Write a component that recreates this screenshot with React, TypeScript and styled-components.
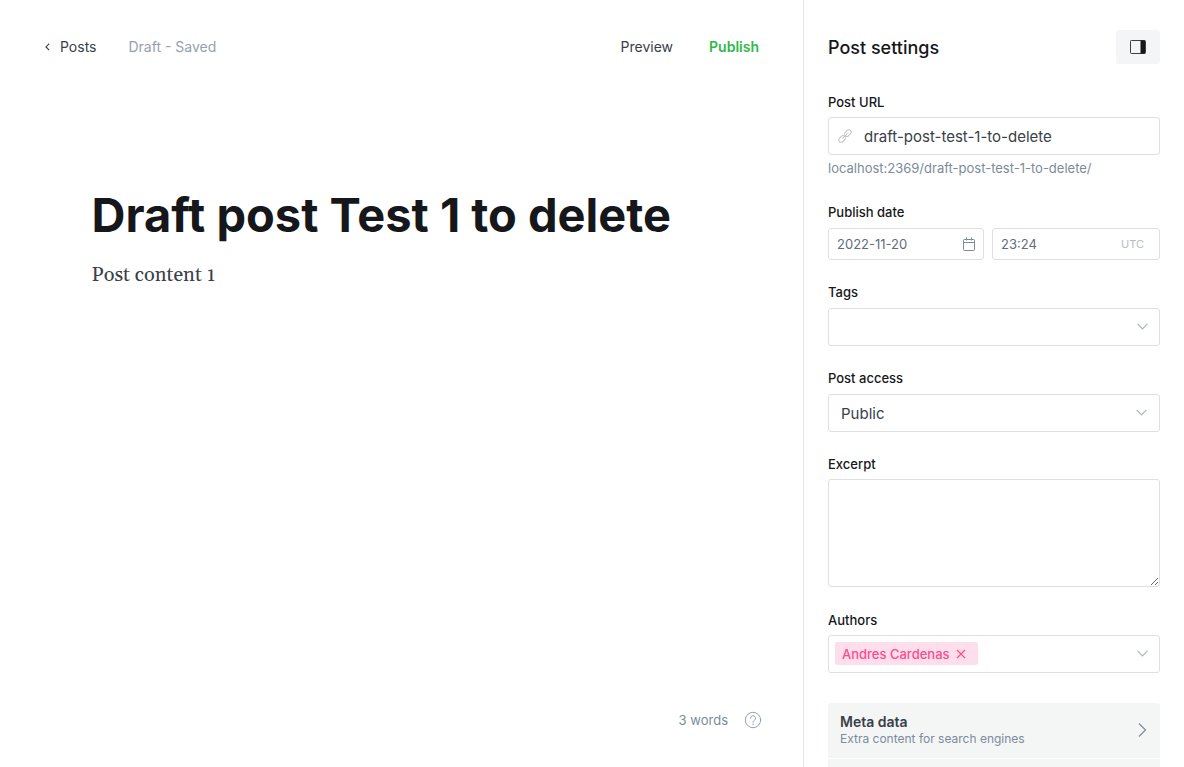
import React from "react";
import styled, { createGlobalStyle } from "styled-components";

const GlobalStyle = createGlobalStyle`
  *, *::before, *::after { box-sizing: border-box; }
  body {
    margin: 0;
    background: #fff;
    color: #15171a;
    font-family: Inter, "Liberation Sans", sans-serif;
    font-size: 14px;
  }
  button, input, select, textarea { font: inherit; color: inherit; }
  button { border: 0; padding: 0; background: none; cursor: pointer; }
`;

const Page = styled.div`
  display: flex;
  height: 100vh;
  overflow: hidden;
`;

const Editor = styled.main`
  flex: 1;
  min-width: 0;
  display: flex;
  flex-direction: column;
`;

const Toolbar = styled.header`
  display: flex;
  align-items: center;
  justify-content: space-between;
  padding: 28px 44px 0;
  height: 64px;
`;

const ToolbarGroup = styled.div<{ $gap: number }>`
  display: flex;
  align-items: center;
  gap: ${(p) => p.$gap}px;
`;

const BackLink = styled.a`
  display: flex;
  align-items: center;
  gap: 8px;
  color: #394047;
  text-decoration: none;
`;

const Status = styled.span`
  color: #95a1ad;
`;

const ToolbarButton = styled.button<{ $primary?: boolean }>`
  color: ${(p) => (p.$primary ? "#30b84a" : "#394047")};
  font-weight: ${(p) => (p.$primary ? 600 : 400)};
`;

const Canvas = styled.article`
  flex: 1;
  width: 100%;
  max-width: 620px;
  margin: 0 auto;
  padding-top: 122px;
`;

const Title = styled.h1`
  margin: 0;
  font-size: 47px;
  line-height: 58px;
  font-weight: 700;
`;

const Body = styled.p`
  margin: 15px 0 0;
  font-family: Georgia, Gelasio, "Liberation Serif", serif;
  font-size: 20px;
  line-height: 32px;
  color: #394047;
`;

const Footer = styled.footer`
  display: flex;
  align-items: center;
  justify-content: flex-end;
  gap: 16px;
  padding: 0 41px 38px;
  font-size: 13px;
  line-height: 18px;
  color: #7c8b9a;
`;

const HelpButton = styled.button`
  display: flex;
  color: #95a1b5;
`;

const Settings = styled.aside`
  flex: 0 0 381px;
  border-left: 1px solid #e4e7e9;
  padding: 30px 24px 0;
  overflow-y: auto;
  scrollbar-width: none;
`;

const SettingsHeader = styled.div`
  display: flex;
  align-items: center;
  justify-content: space-between;
  margin-bottom: 30px;
`;

const SettingsTitle = styled.h2`
  margin: 0;
  padding-top: 2px;
  font-size: 18px;
  line-height: 24px;
  font-weight: 500;
`;

const PanelToggle = styled.button`
  display: flex;
  align-items: center;
  justify-content: center;
  width: 44px;
  height: 34px;
  border-radius: 3px;
  background: #f4f5f6;
`;

const Form = styled.form`
  display: flex;
  flex-direction: column;
  gap: 24px;
`;

const Field = styled.div<{ $tight?: boolean }>`
  display: flex;
  flex-direction: column;
  gap: ${(p) => (p.$tight ? 7 : 8)}px;
  padding-bottom: ${(p) => (p.$tight ? 1 : 0)}px;
`;

const Label = styled.label`
  font-size: 13px;
  line-height: 16px;
  font-weight: 500;
`;

const Control = styled.div<{ $small?: boolean }>`
  display: flex;
  align-items: center;
  height: ${(p) => (p.$small ? 32 : 38)}px;
  padding: ${(p) => (p.$small ? "0 8px" : "0 11px 0 6px")};
  border: 1px solid #dddfe1;
  border-radius: 3px;
  color: ${(p) => (p.$small ? "#626d79" : "#394047")};
  font-size: ${(p) => (p.$small ? 13 : 15)}px;
`;

const UrlControl = styled(Control)`
  padding: 0 12px 0 9px;
  gap: 12px;
`;

const DateControl = styled(Control)`
  padding: 0 7px 0 8px;
`;

const TextInput = styled.input`
  flex: 1;
  min-width: 0;
  width: 100%;
  padding: 0;
  border: 0;
  outline: 0;
  background: transparent;
`;

const Hint = styled.p`
  margin: -3px 0 2px;
  font-size: 13px;
  line-height: 18px;
  color: #7c8b9a;
`;

const DateRow = styled.div`
  display: grid;
  grid-template-columns: 13fr 14fr;
  gap: 8px;
`;

const Zone = styled.span`
  padding-right: 7px;
  font-size: 11px;
  color: #b6bec8;
`;

const SelectControl = styled(Control)`
  padding: 0 12px;
`;

const Select = styled.select`
  flex: 1;
  appearance: none;
  border: 0;
  padding: 0;
  outline: 0;
  background: transparent;
`;

const Excerpt = styled.textarea`
  display: block;
  width: 100%;
  height: 108px;
  padding: 8px 12px;
  border: 1px solid #dddfe1;
  border-radius: 3px;
  outline: 0;
  resize: vertical;
`;

const Token = styled.span`
  display: flex;
  align-items: center;
  gap: 6px;
  height: 23px;
  padding: 0 12px 0 7px;
  margin-bottom: 1px;
  border-radius: 2px;
  background: #ffdeeb;
  color: #fb4b93;
  font-size: 13px;
  font-weight: 500;
  line-height: 22px;
  white-space: nowrap;
`;

const IconButton = styled.button`
  display: flex;
`;

const Sections = styled.nav`
  display: flex;
  flex-direction: column;
  gap: 1px;
  margin-top: 29px;
  border-radius: 3px;
  overflow: hidden;
`;

const SectionButton = styled.button`
  display: flex;
  align-items: center;
  justify-content: space-between;
  min-height: 55px;
  padding: 0 13px 2px 12px;
  background: #f4f6f6;
  text-align: left;
`;

const SectionTitle = styled.strong`
  display: block;
  font-size: 14px;
  line-height: 18px;
  font-weight: 600;
  color: #394047;
`;

const SectionText = styled.span`
  display: block;
  font-size: 12px;
  line-height: 16px;
  color: #7c8b9a;
`;

const ChevronDown = () => (
  <svg width="11" height="8" viewBox="0 0 11 8" fill="none" stroke="#abb4be" strokeWidth="1.2" aria-hidden="true">
    <path d="M.6.9 5.5 5.8 10.4.9" />
  </svg>
);

const ChevronRight = () => (
  <svg width="10" height="16" viewBox="0 0 10 16" fill="none" stroke="#7c8b9a" strokeWidth="1.2" aria-hidden="true">
    <path d="M2 1.5 8.5 8 2 14.5" />
  </svg>
);

const LinkIcon = () => (
  <svg width="14" height="14" viewBox="0 0 24 24" fill="none" stroke="#c0c4c8" strokeWidth="1.8" strokeLinecap="round" strokeLinejoin="round" aria-hidden="true">
    <path d="m8.2 15.8 7.6-7.6" />
    <path d="M12.7 15.2c.2 1-.1 2-.9 2.800l-3.600 3.600a4 4 0 0 1-5.700 0 4 4 0 0 1 0-5.700l3.600-3.600a4 4 0 0 1 5.700 0" />
    <path d="M11.3 8.800c-.2-1 .1-2 .9-2.800l3.600-3.600a4 4 0 0 1 5.700 0 4 4 0 0 1 0 5.700l-3.600 3.600a4 4 0 0 1-5.700 0" />
  </svg>
);

const CalendarIcon = () => (
  <svg width="14" height="14" viewBox="0 0 14 14" fill="none" stroke="#7c8b9a" aria-hidden="true">
    <rect x="1.5" y="2.5" width="11" height="11" rx=".8" />
    <path d="M1.5 5.5h11M4.5.5v3M9.5.5v3" />
  </svg>
);

export default function App() {
  return (
    <Page>
      <GlobalStyle />
      <Editor>
        <Toolbar>
          <ToolbarGroup $gap={32}>
            <BackLink href="#posts">
              <svg width="8" height="10" viewBox="0 0 8 10" fill="none" stroke="#394047" strokeWidth="1.2" aria-hidden="true">
                <path d="M5.2 2.7 2 5.900l3.200 3.200" />
              </svg>
              Posts
            </BackLink>
            <Status>Draft - Saved</Status>
          </ToolbarGroup>
          <ToolbarGroup $gap={36}>
            <ToolbarButton type="button">Preview</ToolbarButton>
            <ToolbarButton type="button" $primary>Publish</ToolbarButton>
          </ToolbarGroup>
        </Toolbar>
        <Canvas>
          <Title>Draft post Test 1 to delete</Title>
          <Body>Post content 1</Body>
        </Canvas>
        <Footer>
          <span>3 words</span>
          <HelpButton type="button" aria-label="Help">
            <svg width="18" height="18" viewBox="0 0 18 18" fill="none" stroke="currentColor" strokeLinecap="round">
              <circle cx="9" cy="9" r="7.7" />
              <path d="M6.5 7.2a2.500 2.500 0 1 1 3.700 2.200c-.8.5-1.200.8-1.200 1.800" />
              <circle cx="9" cy="13.2" r=".3" fill="currentColor" strokeWidth=".6" />
            </svg>
          </HelpButton>
        </Footer>
      </Editor>

      <Settings>
        <SettingsHeader>
          <SettingsTitle>Post settings</SettingsTitle>
          <PanelToggle type="button" aria-label="Toggle settings panel">
            <svg width="16" height="14" viewBox="0 0 16 14" aria-hidden="true">
              <rect x=".5" y=".5" width="15" height="13" rx=".8" fill="none" stroke="#394047" />
              <path d="M10.5.5H15v13h-4.500z" fill="#15171a" />
            </svg>
          </PanelToggle>
        </SettingsHeader>

        <Form onSubmit={(e) => e.preventDefault()}>
          <Field $tight>
            <Label htmlFor="url">Post URL</Label>
            <UrlControl>
              <LinkIcon />
              <TextInput id="url" defaultValue="draft-post-test-1-to-delete" />
            </UrlControl>
            <Hint>localhost:2369/draft-post-test-1-to-delete/</Hint>
          </Field>

          <Field>
            <Label htmlFor="date">Publish date</Label>
            <DateRow>
              <DateControl $small>
                <TextInput id="date" defaultValue="2022-11-20" />
                <CalendarIcon />
              </DateControl>
              <Control $small>
                <TextInput aria-label="Publish time" defaultValue="23:24" />
                <Zone>UTC</Zone>
              </Control>
            </DateRow>
          </Field>

          <Field>
            <Label htmlFor="tags">Tags</Label>
            <Control>
              <TextInput id="tags" />
              <IconButton type="button" aria-label="Show tags"><ChevronDown /></IconButton>
            </Control>
          </Field>

          <Field>
            <Label htmlFor="access">Post access</Label>
            <SelectControl>
              <Select id="access" defaultValue="public">
                <option value="public">Public</option>
              </Select>
              <ChevronDown />
            </SelectControl>
          </Field>

          <Field $tight>
            <Label htmlFor="excerpt">Excerpt</Label>
            <Excerpt id="excerpt" />
          </Field>

          <Field $tight>
            <Label htmlFor="authors">Authors</Label>
            <Control>
              <Token>
                Andres Cardenas
                <IconButton type="button" aria-label="Remove Andres Cardenas">
                  <svg width="10" height="10" viewBox="0 0 10 10" stroke="currentColor" strokeWidth="1.2" aria-hidden="true">
                    <path d="m1 1 8 8m0-8-8 8" />
                  </svg>
                </IconButton>
              </Token>
              <TextInput id="authors" />
              <IconButton type="button" aria-label="Show authors"><ChevronDown /></IconButton>
            </Control>
          </Field>
        </Form>

        <Sections aria-label="More settings">
          <SectionButton type="button">
            <span>
              <SectionTitle>Meta data</SectionTitle>
              <SectionText>Extra content for search engines</SectionText>
            </span>
            <ChevronRight />
          </SectionButton>
          <SectionButton type="button" aria-label="Social cards" />
        </Sections>
      </Settings>
    </Page>
  );
}
